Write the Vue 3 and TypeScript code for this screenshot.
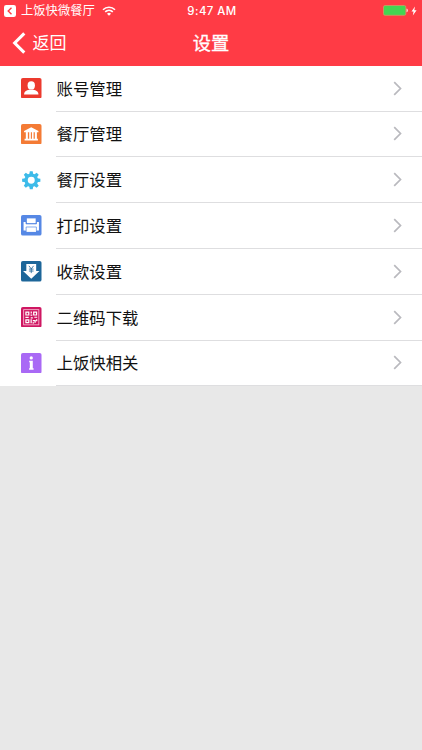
<script setup lang="ts">
type IconName = 'account' | 'hall' | 'gear' | 'printer' | 'payment' | 'qrcode' | 'info'

interface MenuItem {
  icon: IconName
  label: string
}

const items: MenuItem[] = [
  { icon: 'account', label: '账号管理' },
  { icon: 'hall', label: '餐厅管理' },
  { icon: 'gear', label: '餐厅设置' },
  { icon: 'printer', label: '打印设置' },
  { icon: 'payment', label: '收款设置' },
  { icon: 'qrcode', label: '二维码下载' },
  { icon: 'info', label: '上饭快相关' },
]

const teeth: number[] = [0, 45, 90, 135, 180, 225, 270, 315]
</script>

<template>
  <div class="screen">
    <header class="header">
      <div class="status">
        <div class="status-left">
          <svg class="app-back" viewBox="0 0 12 12">
            <rect width="12" height="12" rx="2.2" fill="#fff" />
            <path d="M7.5 2.7 4.2 6l3.3 3.3" fill="none" stroke="#ff3b45" stroke-width="1.4" />
          </svg>
          <span class="app-name">上饭快微餐厅</span>
          <svg class="wifi" viewBox="0 0 14 10">
            <path d="M1 3.7a8.6 8.6 0 0 1 12 0M3.2 5.9a5.5 5.5 0 0 1 7.6 0" fill="none" stroke="#fff" stroke-width="1.6" />
            <path d="M5 7.7a2.9 2.9 0 0 1 4 0L7 9.8z" fill="#fff" />
          </svg>
        </div>
        <span class="time">9:47 AM</span>
        <div class="status-right">
          <svg class="battery" viewBox="0 0 25 11">
            <rect x=".5" y=".5" width="22.3" height="9.8" rx="1.5" fill="#43d552" stroke="#c79a62" stroke-width=".9" />
            <path d="M23.500 3.600q1.400.3 1.400 1.800t-1.400 1.800z" fill="#ffd5d6" />
          </svg>
          <svg class="bolt" viewBox="0 0 6 10">
            <path d="M4 .5.5 5.500h2.100L1.800 9.500 5.600 4.200H3.300z" fill="#fff" />
          </svg>
        </div>
      </div>
      <nav class="nav">
        <div class="back">
          <svg class="back-arrow" viewBox="0 0 14 22">
            <path d="M12.300 1.400 2.700 11l9.600 9.600" fill="none" stroke="#fff" stroke-width="3.100" />
          </svg>
          <span>返回</span>
        </div>
        <h1 class="title">设置</h1>
      </nav>
    </header>

    <main class="list">
      <div v-for="item in items" :key="item.icon" class="row">
        <svg class="icon" viewBox="0 0 20 20">
          <g v-if="item.icon === 'account'">
            <rect width="20" height="20" rx="1.8" fill="#ec3a2e" />
            <ellipse cx="10" cy="7.2" rx="3.6" ry="4.1" fill="#fff" />
            <path d="M3 16c0-3 2.200-4 5-4.600h4c2.800.6 5 1.600 5 4.600z" fill="#fff" />
          </g>
          <g v-else-if="item.icon === 'hall'">
            <rect width="20" height="20" rx="1.8" fill="#f47b35" />
            <path d="M10 3.200 17 6.800v1.300H3V6.800zM4.700 8h2v6.500h-2zM8 8h1.600v6.500H8zM10.700 8h1.600v6.500h-1.600zM13.500 8h2v6.500h-2zM3.500 14.400h13v1.800h-13z" fill="#fff" />
          </g>
          <g v-else-if="item.icon === 'gear'" fill="#3dbbe9">
            <path v-for="angle in teeth" :key="angle" d="M8 4.500 8.600 1.100h2.800l.6 3.400z" :transform="`rotate(${angle} 10 10)`" />
            <circle cx="10" cy="10" r="5" fill="none" stroke="#3dbbe9" stroke-width="3.200" />
          </g>
          <g v-else-if="item.icon === 'printer'">
            <rect width="20" height="20" rx="1.8" fill="#5688e5" />
            <path d="M5.700 3.300h8.600v4.700H5.700z" fill="#fff" />
            <path d="M2.500 6.800h2.300v1.900h10.400V6.800h2.300v8.400H2.500z" fill="#fff" />
            <path d="M5.400 11.600h9.200v4.900H5.400z" fill="#fff" />
            <path d="M4.900 6.800v1.900h10.200V6.800M5 15.200v-3.500h10v3.500" fill="none" stroke="#5688e5" stroke-width=".7" />
          </g>
          <g v-else-if="item.icon === 'payment'">
            <rect width="20" height="20" rx="1.8" fill="#1d6699" />
            <path d="M5.200 3h9.600v6.700H18L10 17.300 2 9.700h3.200z" fill="#fff" />
            <path d="m7.700 4.700 2.300 3 2.300-3M10 7.500v4.300M7.700 7.900h4.600M7.700 9.800h4.600" fill="none" stroke="#1d6699" stroke-width=".8" />
          </g>
          <g v-else-if="item.icon === 'qrcode'">
            <rect width="20" height="20" rx="1.8" fill="#cf1762" />
            <rect x="2.600" y="2.600" width="14.800" height="14.800" fill="none" stroke="#f8bfd5" stroke-width=".8" />
            <g fill="none" stroke="#fff" stroke-width="1.200">
              <path d="M4.800 5h2.800v2.800H4.800zM12.400 5h2.800v2.800h-2.800zM4.800 12.500h2.800v2.700H4.800z" />
              <path d="M10 4.300v2M9.300 8h1.700M4.300 10.100h3.200M9.500 10.500h2M13 10h2.800M9.900 12v3.800M11.500 13.300h2.300v2M15.300 12v2M11.300 15.500h1.500" />
            </g>
          </g>
          <g v-else>
            <rect width="20" height="20" rx="1.8" fill="#a969f5" />
            <circle cx="10" cy="4.800" r="1.600" fill="#fff" />
            <path d="M8 7.500h3.500v7.400h.8v1.500H7.900v-1.500h.7V9H8z" fill="#fff" />
          </g>
        </svg>
        <div class="cell">
          <span class="label">{{ item.label }}</span>
          <svg class="chevron" viewBox="0 0 9 15">
            <path d="m1.200 1.200 6.300 6.300-6.300 6.300" fill="none" stroke="#b9b9be" stroke-width="1.700" />
          </svg>
        </div>
      </div>
    </main>
  </div>
</template>

<style>
body {
  margin: 0;
  background: #e8e8e8;
}
</style>

<style scoped>
.screen {
  min-height: 750px;
  background: #e8e8e8;
  font-family: "Liberation Sans", "Noto Sans CJK SC", sans-serif;
  color: #111;
}

.header {
  box-sizing: border-box;
  height: 65.8px;
  background: #ff3b45;
  color: #fff;
}

.status {
  display: grid;
  grid-template-columns: 1fr auto 1fr;
  align-items: center;
  height: 21px;
  padding: 0 5px 0 4px;
}

.status-left,
.status-right {
  display: flex;
  align-items: center;
}

.status-right {
  justify-content: flex-end;
  gap: 3px;
}

.app-back {
  width: 12px;
  height: 12px;
  margin-right: 5px;
}

.app-name {
  font-size: 12.3px;
  line-height: 20px;
  font-weight: 400;
  white-space: nowrap;
}

.wifi {
  width: 14px;
  height: 10px;
  margin-left: 7px;
}

.time {
  padding-left: 3px;
  font-family: Inter, sans-serif;
  font-size: 11.4px;
  font-weight: 500;
  line-height: 20px;
  letter-spacing: 0.45px;
}

.battery {
  width: 25px;
  height: 11px;
}

.bolt {
  width: 6px;
  height: 10px;
}

.nav {
  display: grid;
  grid-template-columns: 1fr auto 1fr;
  align-items: center;
  height: 44px;
  padding: 0 12px;
}

.back {
  display: flex;
  align-items: center;
  gap: 6.5px;
  font-size: 17px;
  font-weight: 400;
  line-height: 24px;
}

.back span {
  padding-top: 2px;
}

.back-arrow {
  width: 14px;
  height: 22px;
}

.title {
  margin: 0;
  padding-top: 2px;
  font-size: 18.3px;
  font-weight: 400;
  line-height: 26px;
  -webkit-text-stroke: 0.3px #fff;
}

.list {
  background: #fff;
}

.row {
  display: flex;
  align-items: center;
  height: 45.8px;
  padding-left: 21px;
}

.icon {
  flex: none;
  width: 20.5px;
  height: 20.5px;
  margin-right: 14.5px;
  margin-bottom: 1px;
}

.cell {
  box-sizing: border-box;
  display: flex;
  flex: 1;
  align-items: center;
  justify-content: space-between;
  height: 100%;
  padding: 0 20px 0 0.5px;
  border-bottom: 1px solid #dedee0;
}

.label {
  padding-top: 1px;
  font-size: 16.4px;
  line-height: 24px;
}

.chevron {
  width: 9px;
  height: 15px;
}
</style>
